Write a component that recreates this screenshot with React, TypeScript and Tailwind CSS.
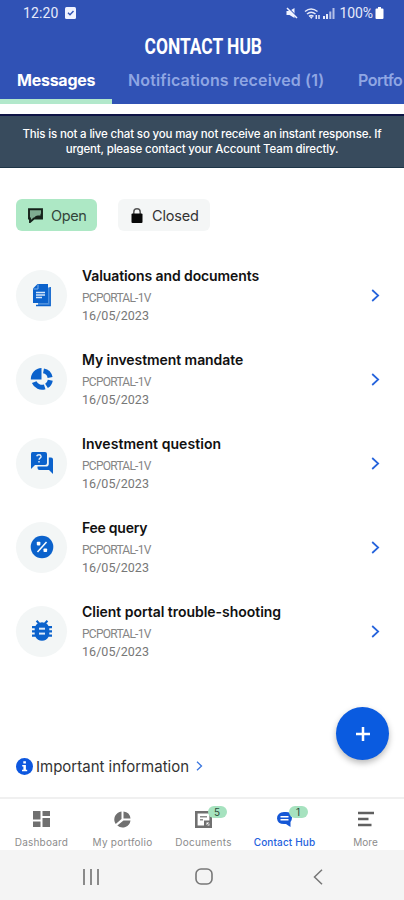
import type { ReactNode } from "react";
import clsx from "clsx";

type Message = {
  id: string;
  title: string;
  titleClass: string;
  icon: ReactNode;
};

const DocumentsIcon = () => (
  <svg width="22" height="24" viewBox="0 0 22 24" fill="none">
    <path d="M7 4.5h12v18H7z" fill="#4d8fdc" />
    <path d="M19.2 4v18.5H5" stroke="#0b62cc" strokeWidth="1.4" />
    <path d="M6.500 1H17v19H2V5.500z" fill="#0b62cc" />
    <path d="M2.500 6H7V1.500" stroke="#7fb0ea" strokeWidth="1" />
    <path d="M5 9.500h9M5 12h9M5 14.500h6" stroke="#d5e6f9" strokeWidth="1.300" />
  </svg>
);

const MandateIcon = () => (
  <svg width="24" height="24" viewBox="0 0 24 24" fill="none">
    <path d="M11.500 12.500H.8A11.200 11.200 0 0 1 11.500 1z" fill="#0b62cc" />
    <path d="M13.500 3.900a8.300 8.300 0 0 1 6.600 6.600" stroke="#0b62cc" strokeWidth="5" />
    <path d="M20.300 13.200a8.500 8.500 0 0 1-3.800 5.700" stroke="#0b62cc" strokeWidth="5" />
    <path d="M14.700 19.900a8.500 8.500 0 0 1-10.500-4.800" stroke="#0b62cc" strokeWidth="5" />
  </svg>
);

const QuestionIcon = () => (
  <svg width="24" height="24" viewBox="0 0 24 24" fill="none">
    <path d="M2.500 1h12.500q2 0 2 2v9q0 2-2 2H5l-4 4V3q0-2 1.500-2z" fill="#0b62cc" />
    <path
      d="M18.800 6.500H21q2 0 2 2V23l-4-4H9.500q-2 0-2-2v-1.500H16q2.800 0 2.800-2.800z"
      fill="#0b62cc"
    />
    <path
      d="M6.700 5.300q.4-1.500 2.300-1.500t2.100 1.700q0 1-1.100 1.700-.9.600-.9 1.500M9 10v1.600"
      stroke="#e6f0fb"
      strokeWidth="1.400"
    />
  </svg>
);

const FeeIcon = () => (
  <svg width="24" height="24" viewBox="0 0 24 24" fill="none">
    <circle cx="12" cy="12" r="11.300" fill="#0b62cc" />
    <path d="M16.500 7l-9 10" stroke="#fff" strokeWidth="1.500" />
    <rect x="6.800" y="6.800" width="3.600" height="3.600" rx=".8" fill="#fff" />
    <rect x="13.500" y="13.500" width="3.600" height="3.600" rx=".8" fill="#fff" />
  </svg>
);

const BugIcon = () => (
  <svg width="24" height="24" viewBox="0 0 24 24">
    <path
      d="M22 7h-3.500a6.500 6.500 0 0 0-2.200-2.500L18.200 2.500 16.700 1l-2.600 2.700a7 7 0 0 0-4.200 0L7.300 1 5.800 2.500l1.900 2A6.500 6.500 0 0 0 5.500 7H2v2.300h2.700v1.900H2v2.300h2.700v2H2v2.300h3.400a7.500 7.500 0 0 0 13.200 0H22v-2.300h-2.700v-2H22v-2.300h-2.700V9.300H22z"
      fill="#0b62cc"
    />
    <rect x="9" y="8.700" width="6" height="2" fill="#dceafa" />
    <rect x="9" y="13.600" width="6" height="2" fill="#dceafa" />
  </svg>
);

const messages: Message[] = [
  {
    id: "valuations",
    title: "Valuations and documents",
    titleClass: "tracking-[-0.1px]",
    icon: <DocumentsIcon />,
  },
  {
    id: "mandate",
    title: "My investment mandate",
    titleClass: "tracking-[-0.07px]",
    icon: <MandateIcon />,
  },
  {
    id: "question",
    title: "Investment question",
    titleClass: "tracking-[0.06px]",
    icon: <QuestionIcon />,
  },
  {
    id: "fee",
    title: "Fee query",
    titleClass: "tracking-[-0.25px]",
    icon: <FeeIcon />,
  },
  {
    id: "trouble",
    title: "Client portal trouble-shooting",
    titleClass: "tracking-[-0.03px]",
    icon: <BugIcon />,
  },
];

const StatusBar = () => (
  <div className="flex h-[26px] items-center pr-5 pl-[23px] font-[Roboto] text-sm text-[#e6eafa]">
    <span className="tracking-[0.1px]">12:20</span>
    <svg className="ml-[7px]" width="11" height="12" viewBox="0 0 11 12" fill="none">
      <rect x="0" y="0" width="11" height="12" rx="1.500" fill="#f0f3ff" />
      <path d="M3 5.800l2 2 3.500-3.800" stroke="#3154b5" strokeWidth="1.400" />
    </svg>
    <div className="grow" />
    <svg width="12" height="12" viewBox="0 0 12 12" fill="none">
      <path d="M.5 4h3l5-3v10l-5-3h-3z" fill="#f0f3ff" />
      <path d="M2 .5l9 9.500" stroke="#3052b5" strokeWidth="1.200" />
      <path d="M1 1l10 10" stroke="#f0f3ff" strokeWidth="1.500" />
    </svg>
    <svg className="ml-1.5" width="17" height="13" viewBox="0 0 17 13" fill="none">
      <path
        d="M1 4.500q6-5 12.500 0M3 7q4.200-3.600 8.500 0M5 9.300q2.200-1.800 4.500 0"
        stroke="#e6eafa"
        strokeWidth="1.500"
      />
      <path d="M5.500 9.500h3.600L7.300 12z" fill="#e6eafa" />
      <path d="M12.300 8v4M15 8v4" stroke="#e6eafa" strokeWidth="1.500" />
    </svg>
    <svg className="ml-[2px]" width="12" height="11" viewBox="0 0 12 11">
      <path d="M0 8h2v3H0zM3 6h2v5H3z" fill="#e6eafa" />
      <path d="M6.300 3.500h2V11h-2zM9.500 0h2v11h-2z" fill="#b4c0e8" />
    </svg>
    <span className="ml-[5px] tracking-[-0.1px]">100%</span>
    <svg className="ml-[2px]" width="9" height="12" viewBox="0 0 8 12">
      <path d="M2.500 0h3v1.500H7q1 0 1 1V11q0 1-1 1H1q-1 0-1-1V2.500q0-1 1-1h1.500z" fill="#fff" />
    </svg>
  </div>
);

const Chevron = ({ className }: { className?: string }) => (
  <svg className={className} width="9" height="13" viewBox="0 0 9 13" fill="none">
    <path d="M1.200 1l6 5.500-6 5.500" stroke="#2563dc" strokeWidth="1.700" />
  </svg>
);

const MessageRow = ({ message }: { message: Message }) => (
  <div className="flex h-[84px] items-center pr-6 pl-4">
    <div className="flex size-[51px] items-center justify-center rounded-full bg-[#f3f6f6]">
      {message.icon}
    </div>
    <div className="ml-[15px] grow whitespace-nowrap">
      <h3
        className={clsx(
          "text-sm leading-5 font-semibold text-[#111]",
          message.titleClass
        )}
      >
        {message.title}
      </h3>
      <p className="mt-[3px] font-[Roboto] text-[12px] leading-[18px] tracking-[-0.75px] text-[#858585]">
        PCPORTAL-1V
      </p>
      <p className="font-[Roboto] text-[12.5px] leading-[18px] tracking-[0.05px] text-[#777]">
        16/05/2023
      </p>
    </div>
    <Chevron />
  </div>
);

const NavItem = ({
  label,
  labelClass,
  active,
  badge,
  children,
}: {
  label: string;
  labelClass?: string;
  active?: boolean;
  badge?: string;
  children: ReactNode;
}) => (
  <div className="flex flex-1 flex-col items-center pt-[11px]">
    <div className="relative flex h-5 w-5 items-center justify-center">
      {children}
      {badge && (
        <span className="absolute -top-[4px] left-[14px] flex h-3 w-[19px] items-center justify-center rounded-full bg-[#a6e2bf] text-[10px] leading-none text-[#2d4a3a]">
          {badge}
        </span>
      )}
    </div>
    <span
      className={clsx(
        "mt-1.5 text-[10px] leading-4 whitespace-nowrap",
        active ? "font-medium text-[#2361dd]" : "text-[#8c8c8c]",
        labelClass
      )}
    >
      {label}
    </span>
  </div>
);

const App = () => {
  return (
    <div className="flex h-[900px] w-[404px] flex-col overflow-hidden bg-white font-[Inter,sans-serif]">
      <header className="h-[104px] shrink-0 bg-[#3052b5]">
        <StatusBar />
        <h1 className="mt-2 flex h-[26px] justify-center pl-0.5 text-white">
          <span className="origin-center scale-x-[0.79] font-[Roboto] text-[22px] leading-[26px] font-bold whitespace-nowrap">
            CONTACT HUB
          </span>
        </h1>
        <nav className="flex h-11 whitespace-nowrap">
          <div className="w-28 shrink-0 border-b-[5px] border-[#b2e8cb] pt-2 pl-[17px] text-base leading-6 font-bold tracking-[-0.25px] text-white">
            Messages
          </div>
          <div className="ml-4 w-[230px] shrink-0 pt-2 text-base leading-6 font-semibold tracking-[0.13px] text-[#8fa6e3]">
            Notifications received (1)
          </div>
          <div className="shrink-0 pt-2 text-base leading-6 font-semibold tracking-[-0.5px] text-[#8fa6e3]">
            Portfo
          </div>
        </nav>
      </header>

      <div className="mt-2.5 h-[54px] shrink-0 border-t-2 border-b border-t-[#0e1445] border-b-[#1e3547] bg-[#384b5d] pt-[11px] text-center text-[11.5px] leading-[15px] font-medium tracking-[-0.16px] whitespace-nowrap text-white">
        <p>This is not a live chat so you may not receive an instant response. If</p>
        <p>urgent, please contact your Account Team directly.</p>
      </div>

      <div className="mt-[31px] flex shrink-0 gap-[21px] pl-4">
        <button className="flex h-8 w-[81px] items-center rounded-md bg-[#ade8c5] pt-0.5 pl-3 text-[14.5px] tracking-[-0.4px] text-[#33453b]">
          <svg className="mb-0.5" width="15" height="15" viewBox="0 0 15 15" fill="none">
            <path d="M1 1.200h13v9.300H6l-4 3.500V10.500H1z" fill="#7fac92" stroke="#15211a" strokeWidth="1.900" />
            <path d="M6 10.500q1-3 4-3h2.500V5.500L14 7v4H6z" fill="#15211a" />
          </svg>
          <span className="ml-2">Open</span>
        </button>
        <button className="flex h-8 w-[92px] items-center rounded-md bg-[#f4f6f6] pt-0.5 pl-[13px] text-[14.5px] tracking-[-0.2px] text-[#333]">
          <svg className="mb-0.5" width="12" height="15" viewBox="0 0 12 15" fill="none">
            <path d="M2.800 6V4a3.200 3.200 0 0 1 6.400 0v2" stroke="#555" strokeWidth="1.500" />
            <rect x=".5" y="5.500" width="11" height="9.500" rx="1" fill="#080808" />
          </svg>
          <span className="ml-[9px]">Closed</span>
        </button>
      </div>

      <main className="mt-[22px] shrink-0">
        {messages.map((message) => (
          <MessageRow key={message.id} message={message} />
        ))}
      </main>

      <div className="relative flex grow items-end pb-5 pl-4">
        <div className="flex h-[22px] items-center">
          <svg width="17" height="17" viewBox="0 0 17 17">
            <circle cx="8.500" cy="8.500" r="8.500" fill="#0d57df" />
            <path d="M7.300 3.200h2.600v2.300H7.300zM6.200 7h3.700v4.700h1.300v1.600H6v-1.600h1.400V8.500H6.200z" fill="#fff" />
          </svg>
          <span className="mt-0.5 ml-[3px] text-[15px] text-[#333]">Important information</span>
          <svg className="ml-[7px]" width="7" height="10" viewBox="0 0 7 10" fill="none">
            <path d="M1 .8L5.500 5 1 9.200" stroke="#3975df" strokeWidth="1.300" />
          </svg>
        </div>
        <button className="absolute top-[34px] right-[15px] flex size-[53px] items-center justify-center rounded-full bg-[#0a5be0] shadow-[0_3px_6px_rgba(0,0,0,0.28)]">
          <svg width="16" height="16" viewBox="0 0 16 16">
            <path d="M8 1v14M1 8h14" stroke="#fff" strokeWidth="2.500" />
          </svg>
        </button>
      </div>

      <nav className="-mr-0.5 flex h-[53px] shrink-0 border-t-2 border-[#f0f0f0] pl-px">
        <NavItem label="Dashboard" labelClass="tracking-[0.2px]">
          <svg width="17" height="16" viewBox="0 0 17 16" fill="#707070">
            <path d="M0 0h7.500v8.500H0zM9.500 0H17v5H9.500zM0 10.500h7.500V16H0zM9.500 7H17v9H9.500z" />
          </svg>
        </NavItem>
        <NavItem label="My portfolio" labelClass="tracking-[0.25px]">
          <svg width="17" height="17" viewBox="0 0 17 17" fill="#707070">
            <path d="M7.500.5V8l-5.800 5A8 8 0 0 1 7.500.5zM9.500.5a8 8 0 0 1 7 7h-7zM9.500 9.500h7A8 8 0 0 1 3.300 14.500z" />
          </svg>
        </NavItem>
        <NavItem label="Documents" labelClass="tracking-[0.3px]" badge="5">
          <svg width="17" height="17" viewBox="0 0 17 17" fill="none">
            <path d="M1.300 1.300h14.400v14.400H1.300z" fill="#fff" stroke="#707070" strokeWidth="2.600" />
            <path d="M5 5.800h7M5 8.800h3" stroke="#8c8c8c" strokeWidth="1.400" />
            <path d="M9 16V9.500h7V11l-4.500 4.500z" fill="#707070" />
            <path d="M11.500 11.500h2.800l-2.800 2.800z" fill="#fff" />
          </svg>
        </NavItem>
        <NavItem label="Contact Hub" labelClass="tracking-[0.15px]" active badge="1">
          <svg width="17" height="17" viewBox="0 0 17 17" fill="none">
            <path
              d="M8 1h2q5.500 0 6 5.500 0 3-1.500 4.500v5l-4.500-3H8Q1.500 13 1 7.500 1.500 1 8 1z"
              fill="#1557d6"
            />
            <path d="M4.500 5.800h8M4.500 8.800h8" stroke="#fff" strokeWidth="1.500" />
          </svg>
        </NavItem>
        <NavItem label="More">
          <svg width="16" height="16" viewBox="0 0 16 16">
            <path d="M0 2h16M0 8h10.500M0 14h13.500" stroke="#606060" strokeWidth="2.400" />
          </svg>
        </NavItem>
      </nav>

      <div className="flex h-[50px] shrink-0 items-center bg-[#f4f4f4] pt-[3px]">
        <svg className="ml-[83px]" width="16" height="16" viewBox="0 0 16 16">
          <path d="M1 0v16M8 0v16M15 0v16" stroke="#8a8a8a" strokeWidth="2" />
        </svg>
        <svg className="ml-24" width="18" height="17" viewBox="0 0 18 17" fill="none">
          <rect x="1" y="1" width="16" height="15" rx="5" stroke="#777" strokeWidth="1.600" />
        </svg>
        <svg className="ml-[100px]" width="10" height="16" viewBox="0 0 10 16" fill="none">
          <path d="M9 .7L1.500 8 9 15.300" stroke="#777" strokeWidth="1.500" />
        </svg>
      </div>
    </div>
  );
};

export default App;
